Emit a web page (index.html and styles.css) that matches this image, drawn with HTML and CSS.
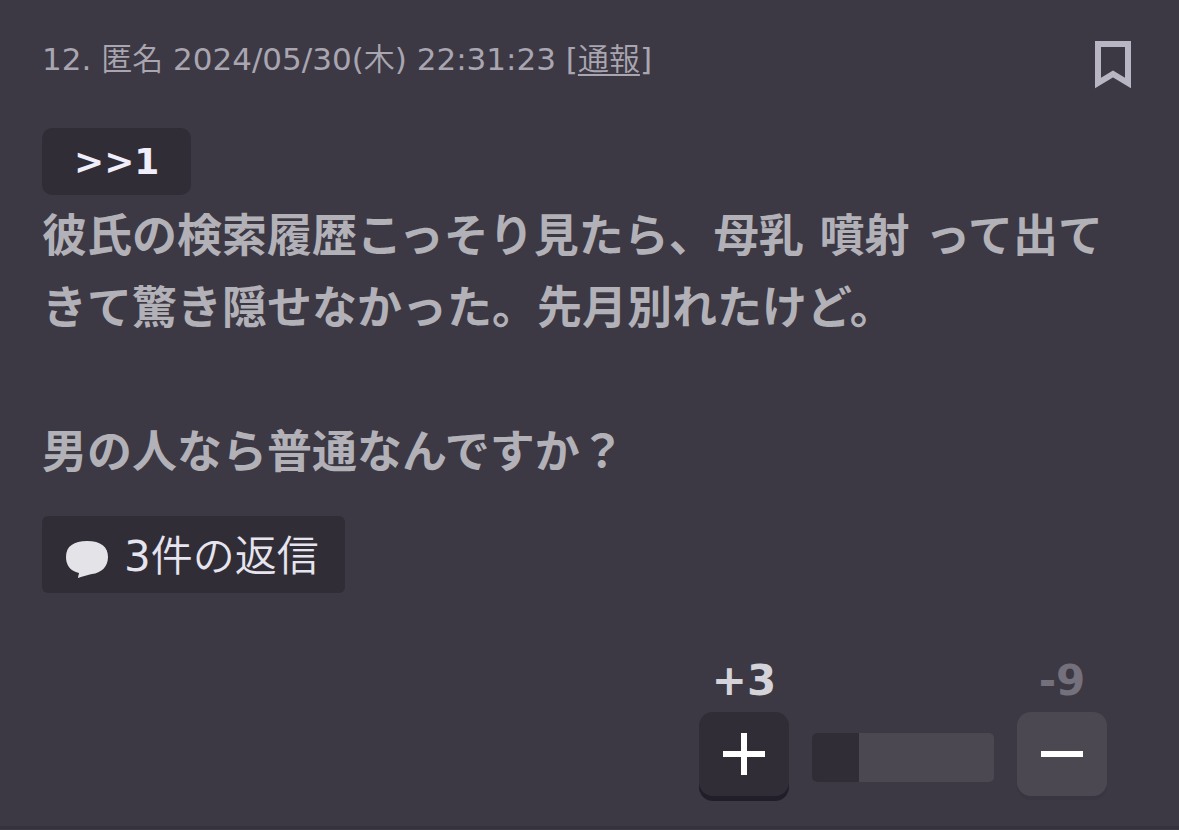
FILE: index.html
```html
<!DOCTYPE html>
<html lang="ja">
<head>
<meta charset="utf-8">
<meta name="viewport" content="width=device-width, initial-scale=1">
<title>コメント 12</title>
<link rel="stylesheet" href="styles.css">
</head>
<body>
<article class="comment">
  <header class="head">
    <p class="meta">12. <span class="thin">匿名</span> 2024/05/30(<span class="thin">木</span>) 22:31:23 [<a class="report thin" href="#report">通報</a>]</p>
    <button class="bookmark" type="button" aria-label="ブックマーク">
      <svg class="bookmark-icon" viewBox="0 0 36 48" aria-hidden="true"><path d="M3 3H33V42L18 33L3 42Z" fill="none" stroke="currentColor" stroke-width="6"/></svg>
    </button>
  </header>
  <a class="anchor" href="#comment-1">&gt;&gt;1</a>
  <div class="text">
    <p>彼氏の検索履歴こっそり見たら、母乳 噴射 って出てきて驚き隠せなかった。先月別れたけど。</p>
    <p>男の人なら普通なんですか？</p>
  </div>
  <button class="replies" type="button">
    <svg class="bubble" viewBox="0 0 42 37" aria-hidden="true"><path d="M21 0C35 0 42 6 42 16C42 26 35 32 26 33C22 34 17 35 12 37C12 35 13 33 13 32C4 30 0 24 0 16C0 5 8 0 21 0Z" fill="currentColor"/></svg>
    <span class="replies-label">3<span class="thin">件の返信</span></span>
  </button>
  <div class="votes">
    <span class="count count-plus">+3</span>
    <span class="count count-minus">-9</span>
    <button class="vote vote-plus" type="button" aria-label="プラス">
      <svg class="sign" viewBox="0 0 42 42" aria-hidden="true"><path d="M0 21H42M21 0V42" stroke="currentColor" stroke-width="6"/></svg>
    </button>
    <div class="bar"><div class="bar-fill"></div></div>
    <button class="vote vote-minus" type="button" aria-label="マイナス">
      <svg class="sign" viewBox="0 0 42 42" aria-hidden="true"><path d="M0 21H42" stroke="currentColor" stroke-width="6"/></svg>
    </button>
  </div>
</article>
</body>
</html>
```
FILE: styles.css
```css
* {
  box-sizing: border-box;
}

body {
  margin: 0;
  background: #3c3944;
  color: #b3b1b8;
  font-family: "DejaVu Sans", "Noto Sans CJK JP", sans-serif;
}

p {
  margin: 0;
}

button {
  border: 0;
  padding: 0;
  font: inherit;
  cursor: pointer;
}

.thin {
  font-family: "Noto Sans CJK JP", sans-serif;
  font-weight: 350;
}

.comment {
  display: flex;
  flex-direction: column;
  align-items: flex-start;
  padding: 41px 48px 24px 42px;
  border-bottom: 3px solid #35323d;
}

.head {
  display: flex;
  justify-content: space-between;
  align-items: flex-start;
  width: 100%;
  margin-bottom: 39px;
}

.meta {
  font-size: 31px;
  line-height: 32px;
  color: #a9a6b1;
}

.report {
  color: inherit;
  text-decoration-thickness: 2px;
  text-underline-offset: 4px;
}

.bookmark {
  background: none;
  color: #b9b6c3;
}

.bookmark-icon {
  display: block;
  width: 36px;
  height: 48px;
}

.anchor {
  padding: 0 32px;
  border-radius: 10px;
  background: #302d37;
  color: #f0eefa;
  font-size: 36px;
  font-weight: 700;
  line-height: 67px;
  text-decoration: none;
}

.text {
  display: grid;
  gap: 72px;
  margin: 6px 0 27px;
  font-size: 45px;
  font-weight: 700;
  line-height: 72px;
}

.replies {
  display: flex;
  align-items: center;
  gap: 16px;
  height: 77px;
  padding: 0 26px 0 24px;
  border-radius: 6px;
  background: #302d37;
  color: #e6e4ee;
  font-size: 42px;
}

.replies-label {
  line-height: 60px;
}

.bubble {
  width: 42px;
  height: 37px;
  margin-top: 10px;
  color: #e4e3e7;
}

.votes {
  display: grid;
  grid-template-columns: 90px 182px 90px;
  column-gap: 23px;
  align-items: center;
  align-self: flex-end;
  margin: 60px 24px 0 0;
}

.count {
  padding-bottom: 3px;
  font-size: 42px;
  font-weight: 700;
  line-height: 56px;
  text-align: center;
}

.count-plus {
  color: #d5d3da;
}

.count-minus {
  grid-column: 3;
  color: #74717c;
}

.vote {
  display: grid;
  place-items: center;
  height: 84px;
  margin-bottom: 6px;
  border-radius: 14px;
  color: #fff;
}

.vote-plus {
  background: #302d37;
  box-shadow: 0 5px 0 #211e29;
}

.vote-minus {
  background: #4b4852;
  box-shadow: 0 4px 0 #393641;
}

.sign {
  width: 42px;
  height: 42px;
}

.bar {
  height: 49px;
  border-radius: 5px;
  overflow: hidden;
  background: #4b4852;
}

.bar-fill {
  width: 26%;
  height: 100%;
  background: #302d37;
}
```
